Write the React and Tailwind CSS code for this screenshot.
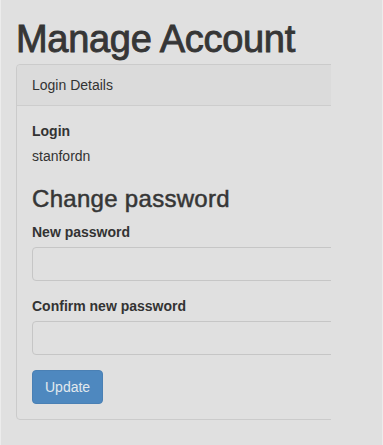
export default function App() {
  return (
    <div
      className="h-[445px] w-[383px] overflow-hidden border-x border-[#ececec] bg-[#e0e0e0] text-[#333]"
      style={{ fontFamily: '"Liberation Sans", Arial, sans-serif' }}
    >
      <div className="w-[330px] overflow-hidden pl-[15px]">
        <h1 className="mt-[17px] mb-[3px] whitespace-nowrap text-[38px] leading-[44px] tracking-[-0.3px] text-[#363636] [-webkit-text-stroke:0.9px_#363636]">
          Manage Account
        </h1>
        <div className="w-[380px] rounded-[4px] border border-[#cbcbcb]">
          <div className="border-b border-[#cdcdcd] bg-[#dbdbdb] px-[15px] py-[10px] text-[14px] leading-[20px] rounded-t-[4px]">
            Login Details
          </div>
          <div className="p-[15px] text-[14px] leading-[20px]">
            <label className="mb-[5px] block font-bold">Login</label>
            <p>stanfordn</p>
            <h3 className="mt-[20px] mb-[10px] text-[24px] leading-[26.4px] tracking-[0.3px] text-[#363636] [-webkit-text-stroke:0.5px_#363636]">
              Change password
            </h3>
            <div className="mb-[15px]">
              <label className="mb-[5px] block font-bold">New password</label>
              <input
                type="password"
                className="block h-[34px] w-full rounded-[4px] border border-[#c6c6c6] bg-[#e0e0e0] px-3"
              />
            </div>
            <div className="mb-[15px]">
              <label className="mb-[5px] block font-bold">
                Confirm new password
              </label>
              <input
                type="password"
                className="block h-[34px] w-full rounded-[4px] border border-[#c6c6c6] bg-[#e0e0e0] px-3"
              />
            </div>
            <button className="h-[34px] rounded-[4px] border border-[#4a80b4] bg-[#4e88bf] px-[12px] text-[14px] text-[#e2e8ee]">
              Update
            </button>
          </div>
        </div>
      </div>
    </div>
  );
}
